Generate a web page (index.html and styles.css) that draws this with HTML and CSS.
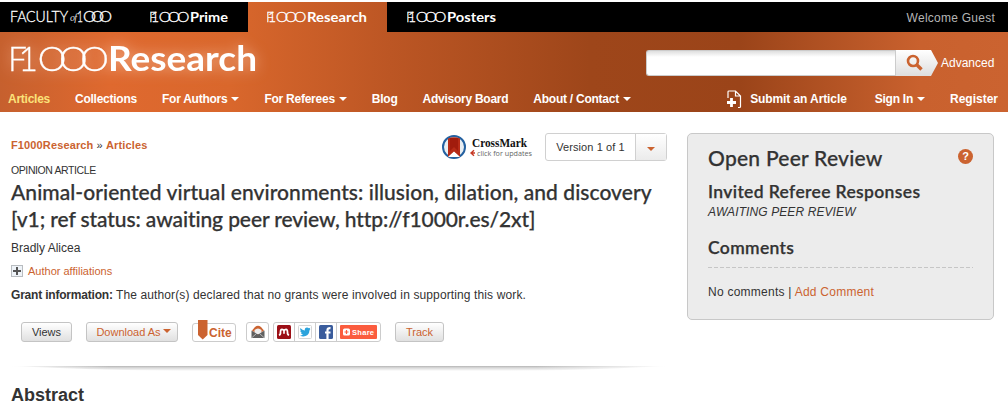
FILE: index.html
```html
<!DOCTYPE html>
<html lang="en">
<head>
    <meta charset="UTF-8">
    <meta name="viewport" content="width=device-width, initial-scale=1.0">
    <title>Animal-oriented virtual environments - F1000Research</title>
    <link rel="stylesheet" href="styles.css">
</head>
<body>
    <header class="header">
        <div class="top-bar">
            <a class="tab tab-faculty">
                <svg width="104" height="30" viewBox="0 0 104 30">
                    <text class="brand" x="0" y="20" font-size="15" textLength="58" lengthAdjust="spacingAndGlyphs">FACULTY</text>
                    <text class="brand-of" x="60" y="19" font-size="10" textLength="7">of</text>
                    <text class="brand" x="67" y="20" font-size="15" textLength="6" lengthAdjust="spacingAndGlyphs">1</text>
                    <text class="brand" transform="scale(1.1 1)" x="66.4" y="20" font-size="15" textLength="26.4">OOO</text>
                </svg>
            </a>
            <a class="tab tab-prime">
                <svg width="82" height="30" viewBox="0 0 82 30">
                    <text class="brand" x="-1" y="20" font-size="14" textLength="10">F1</text>
                    <text class="brand" transform="scale(1.12 1)" x="7.8" y="20" font-size="14" textLength="27.4">OOO</text>
                    <text class="brand-bold" x="40" y="20" font-size="14" textLength="38" lengthAdjust="spacingAndGlyphs">Prime</text>
                </svg>
            </a>
            <a class="tab tab-research">
                <svg width="104" height="30" viewBox="0 0 104 30">
                    <text class="brand" x="-1" y="20" font-size="14" textLength="10">F1</text>
                    <text class="brand" transform="scale(1.12 1)" x="7.8" y="20" font-size="14" textLength="27.4">OOO</text>
                    <text class="brand-bold" x="40" y="20" font-size="14" textLength="60" lengthAdjust="spacingAndGlyphs">Research</text>
                </svg>
            </a>
            <a class="tab tab-posters">
                <svg width="92" height="30" viewBox="0 0 92 30">
                    <text class="brand" x="-1" y="20" font-size="14" textLength="10">F1</text>
                    <text class="brand" transform="scale(1.12 1)" x="7.8" y="20" font-size="14" textLength="27.4">OOO</text>
                    <text class="brand-bold" x="40" y="20" font-size="14" textLength="49" lengthAdjust="spacingAndGlyphs">Posters</text>
                </svg>
            </a>
            <div class="welcome">Welcome Guest</div>
        </div>

        <div class="masthead">
            <svg class="logo" width="270" height="54" viewBox="0 0 270 54">
                <text class="brand" x="-3" y="39" font-size="33.5" textLength="30">F1</text>
                <text class="brand" transform="scale(1.08 1)" x="24.8" y="39" font-size="33.5" textLength="65.8">OOO</text>
                <text class="brand-bold" x="97" y="39" font-size="33.5" textLength="149" lengthAdjust="spacingAndGlyphs">Research</text>
            </svg>
            <form class="search">
                <input type="text" class="search-input">
                <button type="button" class="search-button">
                    <svg width="18" height="18" viewBox="0 0 18 18">
                        <circle cx="7" cy="7" r="5" fill="none" stroke="#cb6330" stroke-width="2.6"/>
                        <path d="M10.5 10.5L15.5 15.5" stroke="#cb6330" stroke-width="3.4"/>
                    </svg>
                </button>
                <a class="advanced">Advanced</a>
            </form>
        </div>

        <nav class="nav">
            <a class="current">Articles</a>
            <a>Collections</a>
            <a class="has-menu">For Authors</a>
            <a class="has-menu">For Referees</a>
            <a>Blog</a>
            <a>Advisory Board</a>
            <a class="has-menu">About / Contact</a>
            <a class="submit">
                <svg width="16" height="19" viewBox="0 0 16 19">
                    <path d="M2 8V1.8Q2 1 3 1H9.5L14.5 6V16.5Q14.5 17.5 13.5 17.5H12M9.5 1V6H14.5" fill="none" stroke="#fff" stroke-width="1.2"/>
                    <path d="M5.5 8V17M1 12.5H10" stroke="#fff" stroke-width="2.8"/>
                </svg>
                Submit an Article
            </a>
            <a class="has-menu sign-in">Sign In</a>
            <a class="register">Register</a>
        </nav>
    </header>

    <div class="page">
        <main class="article">
            <div class="article-top">
                <div class="breadcrumbs"><a>F1000Research</a> » <a>Articles</a></div>
                <svg class="crossmark" width="92" height="28" viewBox="0 0 92 28">
                    <circle cx="12" cy="13" r="11" fill="#e9eef2" stroke="#2461a0" stroke-width="2"/>
                    <path d="M6 4.5Q12 2 18 4.5V23L12 18L6 23Z" fill="#b72b17"/>
                    <path d="M8 4V17L12 13L16 17V4Z" fill="#951407" opacity=".65"/>
                    <path d="M6 23L12 17.5L18 23" fill="#fff"/>
                    <text class="crossmark-name" x="30" y="12.5" textLength="55" lengthAdjust="spacingAndGlyphs">CrossMark</text>
                    <path d="M32 16.2L29 19L32 21.8M29 19H33" fill="none" stroke="#c63a26" stroke-width="1.4"/>
                    <text class="crossmark-note" x="35" y="22" textLength="55" lengthAdjust="spacingAndGlyphs">click for updates</text>
                </svg>
                <div class="version">
                    <span class="version-label">Version 1 of 1</span>
                    <span class="version-toggle"></span>
                </div>
            </div>
            <div class="article-type">OPINION ARTICLE</div>
            <h1 class="title"><span class="title-first">Animal-oriented virtual environments: illusion, dilation, and discovery</span><br><span class="title-second">[v1; ref status: awaiting peer review, http://f1000r.es/2xt]</span></h1>
            <div class="author">Bradly Alicea</div>
            <a class="affiliations">
                <svg width="12" height="12" viewBox="0 0 12 12">
                    <rect x=".5" y=".5" width="11" height="11" fill="#eef3f8" stroke="#b8bcc0"/>
                    <path d="M6 2V10M2 6H10" stroke="#555" stroke-width="2"/>
                </svg>
                Author affiliations
            </a>
            <div class="grant"><b>Grant information:</b> The author(s) declared that no grants were involved in supporting this work.</div>

            <div class="toolbar">
                <a class="button button-views">Views</a>
                <a class="button button-download">Download As</a>
                <a class="cite">
                    <svg width="10" height="20" viewBox="0 0 10 20"><path d="M0 0H9.5V15L4.7 19.5L0 15Z" fill="#cb6330"/></svg>
                    Cite
                </a>
                <a class="share-box mail">
                    <svg width="14" height="14" viewBox="0 0 14 14">
                        <path d="M1 5.5L4 2Q7 -.7 10 2L13 5.5L7 10Z" fill="#cb6330"/>
                        <path d="M3.5 5Q7 2 10.5 5V9H3.5Z" fill="#eee"/>
                        <path d="M.5 5.5L7 9.5L13.5 5.5V13H.5Z" fill="#606060"/>
                        <path d="M.5 13L5.5 8.5M13.5 13L8.5 8.5" stroke="#ddd" stroke-width=".7"/>
                    </svg>
                </a>
                <div class="share-box share-group">
                    <span class="share-item">
                        <svg width="14" height="14" viewBox="0 0 14 14">
                            <rect width="14" height="14" rx="1.5" fill="#9c0f16"/>
                            <path d="M2 10.3Q3.8 9.5 3.5 7Q3.5 4.3 5 4.3Q6.3 4.3 7 6Q7.7 4.3 9 4.3Q10.5 4.3 10.5 7Q10.2 9.5 12 10.3M7 6V8.8" fill="none" stroke="#fff" stroke-width="1.7"/>
                        </svg>
                    </span>
                    <span class="share-item">
                        <svg width="14" height="14" viewBox="0 0 14 14">
                            <rect x=".5" y=".5" width="13" height="13" rx="1" fill="#fff" stroke="#d5d5d5"/>
                            <path d="M2.3 3Q4.5 5.5 6.8 5.4Q6.5 2.5 9 2.4Q10.2 2.4 10.8 3.2L12.3 2.8L11.6 4.2L12.4 4.4L11.4 5.4Q11.3 9.7 7.5 11.1Q4.5 12 2 10.4Q4 10.4 5 9.5Q3.3 9.2 3 8H3.9Q2.2 7.2 2.3 5.5L3.1 5.8Q1.7 4.7 2.3 3Z" fill="#2ba3dc"/>
                        </svg>
                    </span>
                    <span class="share-item">
                        <svg width="14" height="14" viewBox="0 0 14 14">
                            <rect width="14" height="14" rx="1.5" fill="#3a5c9c"/>
                            <path d="M8.5 14V5Q8.5 3 11.5 3.2M6 7.5H11.5" fill="none" stroke="#fff" stroke-width="2.2"/>
                        </svg>
                    </span>
                    <span class="share-item share-wide">
                        <svg width="37" height="14" viewBox="0 0 37 14">
                            <rect width="37" height="14" rx="1" fill="#fb5c3e"/>
                            <rect x="3" y="3.5" width="7" height="7" rx="1.5" fill="#fff"/>
                            <path d="M6.5 5V9M4.5 7H8.5" stroke="#fb5c3e" stroke-width="1.2"/>
                            <text class="share-text" x="12" y="10" textLength="22">Share</text>
                        </svg>
                    </span>
                </div>
                <a class="button button-track">Track</a>
            </div>

            <svg class="divider" width="656" height="8" viewBox="0 0 656 8">
                <defs>
                    <linearGradient id="divider-fade" x1="0" y1="0" x2="0" y2="1">
                        <stop offset="0" stop-color="#b4b4b4"/>
                        <stop offset=".35" stop-color="#d8d8d8"/>
                        <stop offset="1" stop-color="#fff"/>
                    </linearGradient>
                    <linearGradient id="divider-ends">
                        <stop offset="0" stop-color="#fff"/>
                        <stop offset=".15" stop-color="#fff" stop-opacity="0"/>
                        <stop offset=".8" stop-color="#fff" stop-opacity="0"/>
                        <stop offset="1" stop-color="#fff"/>
                    </linearGradient>
                </defs>
                <path d="M0 0H656Q560 5 480 5H170Q80 4 0 0Z" fill="url(#divider-fade)"/>
                <rect width="656" height="8" fill="url(#divider-ends)"/>
            </svg>
            <h2 class="abstract">Abstract</h2>
        </main>

        <aside class="review">
            <div class="review-head">
                <h2>Open Peer Review</h2>
                <span class="help">?</span>
            </div>
            <h3 class="invited">Invited Referee Responses</h3>
            <div class="awaiting">AWAITING PEER REVIEW</div>
            <h3 class="comments">Comments</h3>
            <svg class="dashes" width="265" height="1"><path d="M0 .5H265" stroke="#c6c6c6" stroke-dasharray="4 2"/></svg>
            <div class="comment-links">No comments | <a>Add Comment</a></div>
        </aside>
    </div>
</body>
</html>
```

FILE: styles.css
```css
body {
    margin: 0;
    padding-top: 2px;
    height: 406px;
    overflow: hidden;
    background: #fff;
    color: #333;
    font-family: "Liberation Sans", Arial, sans-serif;
    font-size: 12px;
}

svg {
    display: block;
    flex-shrink: 0;
}

/* header */
.header {
    height: 110px;
    background: linear-gradient(90deg, #c6602e 0, #df692f 110px, #d9672c 230px, #bc5624 390px, #9e461a 590px, #9b4419 740px, #c9612e 920px, #cb6330 1008px);
    color: #fff;
}

.top-bar {
    display: flex;
    height: 30px;
}

.tab {
    box-sizing: border-box;
    background: #000;
}

.tab-faculty {
    width: 130px;
    padding-left: 10px;
}

.tab-prime {
    width: 118px;
    padding-left: 20px;
}

.tab-research {
    width: 139px;
    padding-left: 19px;
    background: none;
}

.tab-posters {
    width: 120px;
    padding-left: 20px;
}

.brand,
.brand-bold {
    font-family: Lato, sans-serif;
    font-weight: 300;
    fill: #fff;
}

.brand {
    stroke: #fff;
    stroke-width: 0.3px;
}

.brand-bold {
    font-weight: 700;
}

.brand-of {
    font-family: "Liberation Serif", serif;
    font-style: italic;
    fill: #ddd;
}

.welcome {
    flex: 1;
    padding-right: 13px;
    background: #000;
    color: #b5b5b5;
    line-height: 32px;
    text-align: right;
    letter-spacing: 0.25px;
}

.masthead {
    display: flex;
    justify-content: space-between;
    height: 54px;
    padding: 0 13px 0 11px;
}

.logo {
    overflow: visible;
    filter: drop-shadow(0 0 7px rgba(255, 220, 200, 0.6));
}

.search {
    display: flex;
    width: 349px;
    height: 26px;
    margin-top: 18px;
}

.search-input {
    box-sizing: border-box;
    width: 249px;
    height: 26px;
    padding: 0 6px;
    border: 1px solid #ccc;
    border-right: 0;
    border-radius: 3px 0 0 3px;
    background: linear-gradient(#dedede, #fff 6px);
}

.search-button {
    width: 43px;
    height: 26px;
    padding: 0 0 0 10px;
    border: 0;
    border-left: 1px solid #ccc;
    background: linear-gradient(#fff, #dedede);
    clip-path: polygon(0 0, 36px 0, 43px 50%, 36px 100%, 0 100%);
}

.advanced {
    margin-left: 3px;
    line-height: 26px;
}

.nav {
    display: flex;
    gap: 25px;
    height: 26px;
    padding: 0 10px 0 8px;
    font-weight: bold;
    line-height: 26px;
    letter-spacing: -0.25px;
    white-space: nowrap;
}

.nav .current {
    color: #fbe27a;
}

.has-menu::after {
    content: "";
    display: inline-block;
    margin-left: 4px;
    vertical-align: 2px;
    border: 4px solid transparent;
    border-top-color: #fff;
    border-bottom: 0;
}

.submit {
    display: flex;
    align-items: center;
    gap: 8px;
    margin-left: auto;
    letter-spacing: -0.1px;
}

.sign-in {
    margin-left: 3px;
}

.nav .register {
    letter-spacing: 0;
}

/* article */
.page {
    display: flex;
    align-items: flex-start;
    padding: 21px 14px 0 11px;
}

.article {
    width: 656px;
    margin-right: 20px;
}

.article-top {
    display: flex;
    height: 28px;
}

a {
    cursor: pointer;
}

.breadcrumbs {
    width: 431px;
    font-size: 11px;
    line-height: 24px;
    letter-spacing: 0.13px;
}

.breadcrumbs a {
    color: #cb6330;
    font-weight: bold;
}

.crossmark {
    margin-top: 1px;
}

.crossmark-name {
    font-family: "Liberation Serif", serif;
    font-size: 12px;
    font-weight: bold;
    fill: #111;
}

.crossmark-note {
    font-family: "Open Sans", sans-serif;
    font-size: 7.5px;
    fill: #666;
}

.version {
    display: flex;
    box-sizing: border-box;
    width: 122px;
    height: 28px;
    margin-left: auto;
    border: 1px solid #d0d0d0;
    border-radius: 3px;
    font-size: 11px;
}

.version-label {
    width: 89px;
    border-right: 1px solid #d0d0d0;
    line-height: 27px;
    text-align: center;
    letter-spacing: 0.1px;
}

.version-toggle {
    flex: 1;
    display: flex;
    align-items: center;
    justify-content: center;
    background: linear-gradient(#fff, #ebebeb);
}

.version-toggle::after {
    content: "";
    margin-top: 4px;
    border: 4px solid transparent;
    border-top-color: #cb6330;
    border-bottom: 0;
}

.article-type {
    height: 17px;
    font-size: 10.5px;
    line-height: 18px;
    letter-spacing: -0.4px;
}

.title {
    margin: 0;
    font-family: Lato, sans-serif;
    font-size: 21px;
    font-weight: 500;
    line-height: 27px;
    white-space: nowrap;
    -webkit-text-stroke: 0.25px #333;
}

.title-first {
    letter-spacing: 0.06px;
}

.title-second {
    letter-spacing: -0.1px;
}

.author {
    height: 28px;
    margin-top: 1px;
    line-height: 30px;
}

.affiliations {
    display: flex;
    align-items: center;
    gap: 5px;
    height: 20px;
    color: #cb6330;
    font-size: 11px;
}

.grant {
    height: 28px;
    line-height: 28px;
    letter-spacing: 0.12px;
    white-space: nowrap;
}

.grant b {
    letter-spacing: -0.2px;
}

/* article tools */
.toolbar {
    display: flex;
    height: 20px;
    margin: 13px 0 0 10px;
}

.button {
    box-sizing: border-box;
    height: 20px;
    border: 1px solid #c4c4c4;
    border-radius: 3px;
    background: linear-gradient(#fff, #e0e0e0);
    color: #cb6330;
    font-size: 11px;
    line-height: 19px;
    text-align: center;
}

.button-views {
    width: 51px;
    color: #333;
}

.button-download {
    width: 92px;
    margin-left: 14px;
    padding-left: 3px;
}

.button-download::after {
    content: "";
    display: inline-block;
    margin-left: 2px;
    vertical-align: 3px;
    border: 4px solid transparent;
    border-top-color: #cb6330;
    border-bottom: 0;
}

.button-track {
    width: 49px;
    margin-left: 14px;
}

.cite {
    display: flex;
    box-sizing: border-box;
    width: 44px;
    height: 19px;
    margin: 1px 0 0 14px;
    padding-left: 5px;
    gap: 1px;
    border: 1px solid #ccc;
    border-radius: 3px;
    color: #cb6330;
    font-size: 12px;
    font-weight: bold;
    line-height: 19px;
}

.cite svg {
    margin-top: -4px;
}

.share-box {
    display: flex;
    box-sizing: border-box;
    height: 20px;
    border: 1px solid #ccc;
    border-radius: 3px;
}

.mail {
    width: 23px;
    margin-left: 10px;
    padding: 2px 0 0 4px;
}

.share-group {
    width: 108px;
    margin-left: 4px;
}

.share-item {
    width: 21px;
    padding: 2px 0 0 3px;
    box-sizing: border-box;
    border-right: 1px solid #ccc;
}

.share-item.share-wide {
    width: 43px;
    border-right: 0;
}

.share-text {
    font-family: "Liberation Sans", Arial, sans-serif;
    font-size: 7.5px;
    font-weight: bold;
    fill: #fff;
}

.divider {
    margin-top: 24px;
}

.abstract {
    margin: 10px 0 0;
    font-size: 18px;
    line-height: 22px;
}

/* review panel */
.review {
    box-sizing: border-box;
    width: 307px;
    height: 187px;
    padding: 10px 20px;
    border: 1px solid #c8c8c8;
    border-radius: 5px;
    background: #ececec;
}

.review-head {
    display: flex;
    justify-content: space-between;
    height: 30px;
}

.review h2,
.review h3 {
    margin: 0;
    font-family: Lato, sans-serif;
    font-weight: 500;
    -webkit-text-stroke: 0.25px #333;
}

.review h2 {
    font-size: 21px;
    line-height: 27px;
    letter-spacing: 0.25px;
}

.review h3 {
    height: 22px;
    font-size: 17.5px;
    font-weight: 600;
    line-height: 22px;
    letter-spacing: 0.35px;
}

.help {
    width: 15px;
    height: 15px;
    margin-top: 5px;
    border-radius: 50%;
    background: #cb6330;
    color: #fff;
    font-size: 11px;
    font-weight: bold;
    line-height: 15px;
    text-align: center;
}

.review .invited {
    margin-top: 7px;
}

.awaiting {
    height: 16px;
    font-style: italic;
    line-height: 18px;
    letter-spacing: 0.1px;
}

.review .comments {
    margin-top: 18px;
}

.dashes {
    margin-top: 8px;
}

.comment-links {
    margin-top: 16px;
    line-height: 17px;
    letter-spacing: 0.25px;
}

.comment-links a {
    color: #cb6330;
}
```
